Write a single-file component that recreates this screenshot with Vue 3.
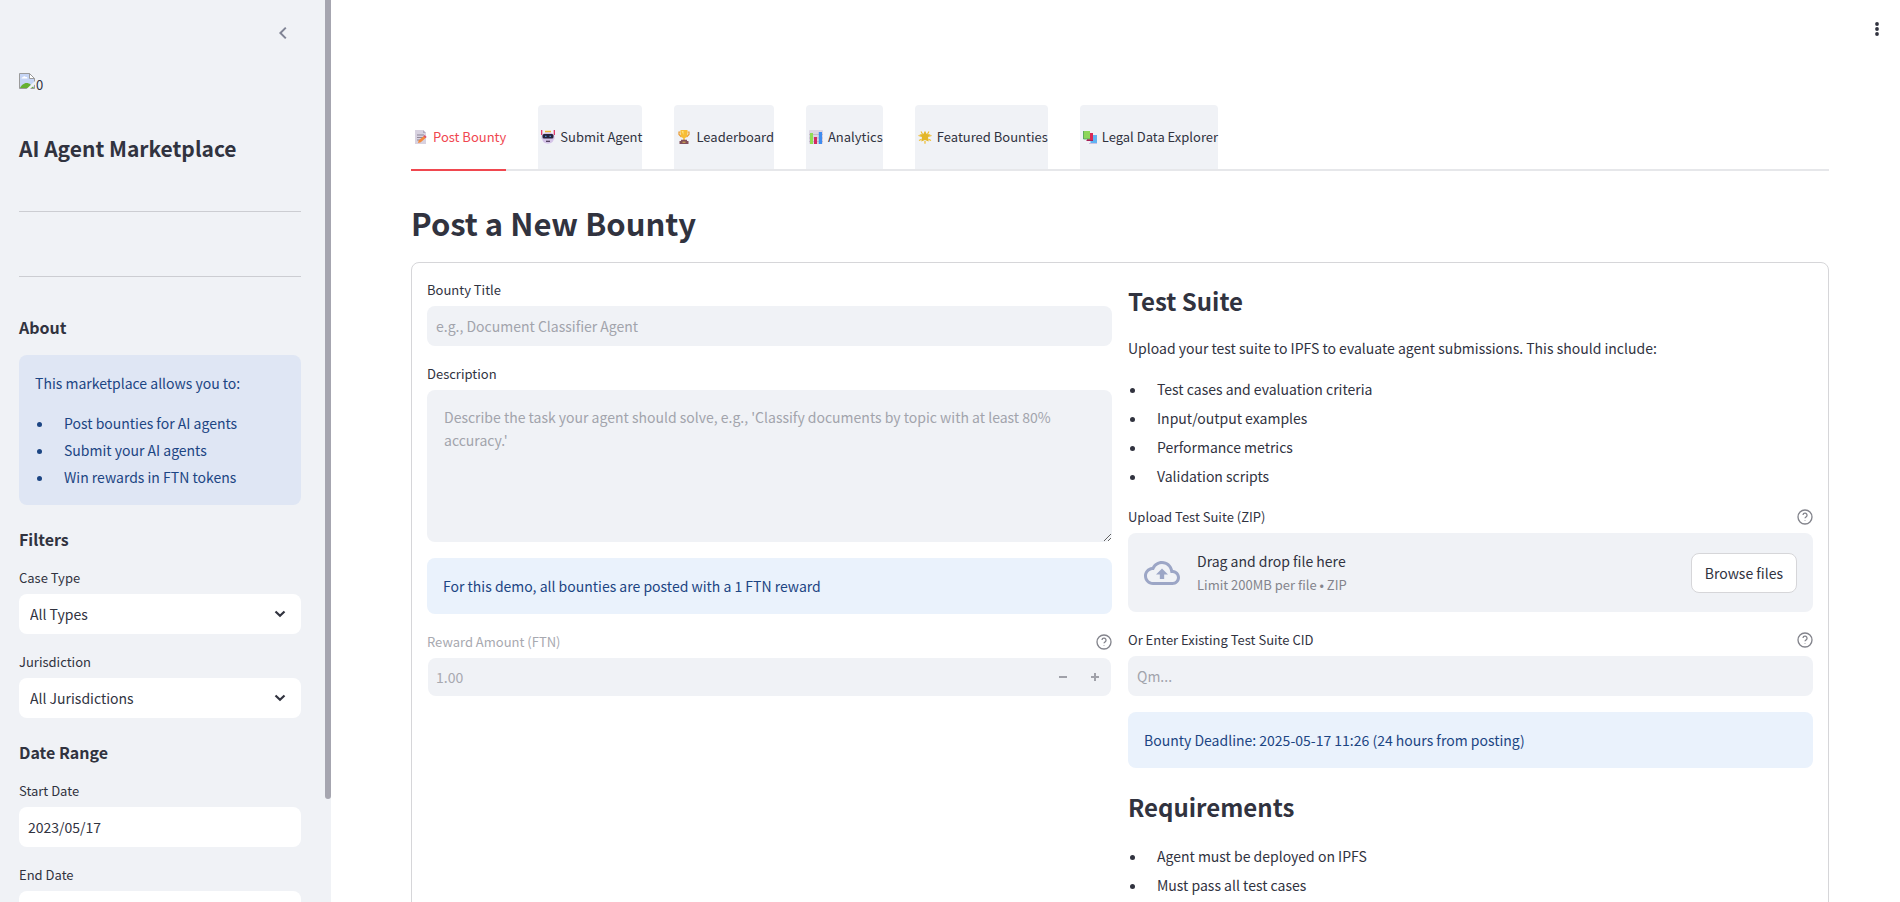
<script setup>
import { ref } from 'vue'

const tabs = [
  { icon: 'memo', label: 'Post Bounty' },
  { icon: 'robot', label: 'Submit Agent' },
  { icon: 'trophy', label: 'Leaderboard' },
  { icon: 'chart', label: 'Analytics' },
  { icon: 'star', label: 'Featured Bounties' },
  { icon: 'books', label: 'Legal Data Explorer' },
]
const active = ref(0)
const about = ['Post bounties for AI agents', 'Submit your AI agents', 'Win rewards in FTN tokens']
const suite = ['Test cases and evaluation criteria', 'Input/output examples', 'Performance metrics', 'Validation scripts']
const requirements = ['Agent must be deployed on IPFS', 'Must pass all test cases']
const selects = [
  { id: 'case-type', label: 'Case Type', value: 'All Types' },
  { id: 'jurisdiction', label: 'Jurisdiction', value: 'All Jurisdictions' },
]
const dates = [
  { id: 'start-date', label: 'Start Date', value: '2023/05/17' },
  { id: 'end-date', label: 'End Date', value: '2025/05/16' },
]
</script>

<template>
  <div class="app">
    <aside class="sidebar">
      <div class="sidebar-head">
        <button class="plain" aria-label="Collapse sidebar">
          <svg width="20" height="20" viewBox="0 0 20 20" fill="none" stroke="#808495" stroke-width="2"><path d="M12.8 4.6 7.4 10l5.4 5.4" /></svg>
        </button>
      </div>
      <div class="missing">
        <svg width="16" height="16" viewBox="0 0 16 16">
          <path d="M.5 15.500V.5h10l5 5v10z" fill="#c6d5f5" stroke="#9b9b9b" />
          <path d="M2.500 5.500h6c0-1.500-1-1.800-1.800-1.500C6 2.700 4.300 3 4.200 4.200c-1 0-1.600.5-1.700 1.300z" fill="#fff" />
          <path d="M1 15c1-2.500 4-5 6.500-5 1.500 0 3 .5 4 1.500L15 15z" fill="#66b032" />
          <path d="M16 8 7.500 16H11l5-4.500z" fill="#f0f2f6" />
          <path d="M10.500.5v5h5z" fill="#fff" stroke="#9b9b9b" />
        </svg>
        <span>0</span>
      </div>
      <h1>AI Agent Marketplace</h1>
      <hr />
      <hr />
      <h3>About</h3>
      <div class="alert about">
        <p>This marketplace allows you to:</p>
        <ul>
          <li v-for="item in about" :key="item">{{ item }}</li>
        </ul>
      </div>
      <h3>Filters</h3>
      <div v-for="s in selects" :key="s.id" class="field">
        <label :for="s.id">{{ s.label }}</label>
        <div class="select">
          <select :id="s.id"><option>{{ s.value }}</option></select>
          <svg width="12" height="8" viewBox="0 0 12 8" fill="none" stroke="#31333f" stroke-width="2.200"><path d="m1.500 1.500 4.500 4.300 4.500-4.300" /></svg>
        </div>
      </div>
      <h3 class="range">Date Range</h3>
      <div v-for="d in dates" :key="d.id" class="field">
        <label :for="d.id">{{ d.label }}</label>
        <input :id="d.id" type="text" :value="d.value" />
      </div>
      <span class="thumb"></span>
    </aside>

    <main>
      <button class="plain menu" aria-label="Main menu">
        <svg width="20" height="20" viewBox="0 0 20 20" fill="#31333f"><circle cx="10" cy="5" r="1.900" /><circle cx="10" cy="10" r="1.900" /><circle cx="10" cy="15" r="1.900" /></svg>
      </button>

      <div class="tabs" role="tablist">
        <button v-for="(t, i) in tabs" :key="t.label" role="tab" class="tab" :class="{ active: i === active }" :aria-selected="i === active" @click="active = i">
          <svg class="emoji" width="14" height="14" viewBox="0 0 14 14">
            <g v-if="t.icon === 'memo'">
              <path d="M1 0h8l3 3v11H1z" fill="#d8d2e0" />
              <path d="M9 0v3h3z" fill="#b3aabd" />
              <path d="M3 5h7M3 7.500h6M3 10h4" stroke="#8f8799" />
              <path d="m4 13 .8-2.800 5.400-4.500 1.900 1.900-5.300 4.700z" fill="#f58a3c" />
              <path d="m9.500 6.200 1.200-1.200 2 2-1.100 1.100z" fill="#d94f70" />
            </g>
            <g v-else-if="t.icon === 'robot'">
              <path d="M.7 0v5M13.300 0v5" stroke="#e0285f" stroke-width="1.200" />
              <path d="M4 1.600h6" stroke="#f2b632" stroke-width="1.600" />
              <path d="M1.500 5C2 1.200 12 1.200 12.500 5l1 .5v3.500l-1 .5c0 5.500-11 5.500-11 0l-1-.5V5.500z" fill="#d5c4e8" />
              <rect x="1.500" y="4" width="11" height="4.500" rx="1.500" fill="#27233d" />
              <path d="M4 6.300h1.500M8.500 6.300H10" stroke="#4b8ed0" stroke-width="1.200" />
              <path d="M5 11.300h4" stroke="#463353" stroke-width="1.200" />
            </g>
            <g v-else-if="t.icon === 'trophy'">
              <path d="M3.500 2H2v2.500L4.500 7M10.500 2H12v2.500L9.500 7" fill="none" stroke="#e99a2f" stroke-width="1.200" />
              <path d="M3.500 0h7v4c0 3-1.700 3.800-2.700 4v2.500H6.200V8C5.200 7.800 3.500 7 3.500 4z" fill="#f7bd35" />
              <path d="M4.500 1h2v4z" fill="#ffe37b" />
              <path d="M4 9.800h6V11h1.500v3h-9v-3H4z" fill="#83505a" />
              <path d="M5.500 12.200h3" stroke="#e5b94f" />
            </g>
            <g v-else-if="t.icon === 'chart'">
              <rect width="14" height="14" rx="1" fill="#dcd5e3" />
              <path d="M0 4.500h14M0 8h14M0 11.500h14" stroke="#b8afc2" stroke-width=".7" />
              <path d="M1 3h3v11H1z" fill="#91dc55" />
              <path d="M5 7h3v7H5z" fill="#d22961" />
              <path d="M9.800 2H13v12H9.800z" fill="#3f8cf0" />
            </g>
            <g v-else-if="t.icon === 'star'">
              <path d="M3 1.500 4.500 4M11 1.500 9.500 4M.5 5.500l2.500.8M13.500 5.500l-2.500.8M1 10.500l2.500-1.300M13 10.500l-2.500-1.300M7 11v2.700" stroke="#efbd2c" stroke-width="1.200" />
              <path d="m7 .8 1.700 3.300 3.800.5-2.500 2.900.7 3.900L7 9.900l-3.700 1.500.7-3.900-2.500-2.900 3.800-.5z" fill="#e3b628" />
            </g>
            <g v-else>
              <path d="M7.500 5H14v8H7.500z" fill="#60b2f2" />
              <path d="M6 13.500h8" stroke="#c9c2e4" />
              <path d="M4 3h6v7H4z" fill="#d92b57" />
              <path d="M3.500 10.500H10" stroke="#a61f56" />
              <path d="M0 1h7v8H0z" fill="#8ed65a" />
              <path d="M.5 9H7M.4 1v8" stroke="#4b9c66" stroke-width=".8" />
            </g>
          </svg>
          <span>{{ t.label }}</span>
        </button>
      </div>

      <h2>Post a New Bounty</h2>

      <form class="card" @submit.prevent>
        <section class="col">
          <div class="field">
            <label for="title">Bounty Title</label>
            <input id="title" type="text" placeholder="e.g., Document Classifier Agent" />
          </div>
          <div class="field">
            <label for="description">Description</label>
            <textarea id="description" placeholder="Describe the task your agent should solve, e.g., 'Classify documents by topic with at least 80% accuracy.'"></textarea>
          </div>
          <div class="alert">For this demo, all bounties are posted with a 1 FTN reward</div>
          <div class="field disabled">
            <div class="label-row">
              <label for="reward">Reward Amount (FTN)</label>
              <svg class="help" width="16" height="16" viewBox="0 0 24 24"><circle cx="12" cy="12" r="10.500" /><path d="M9 9a3 3 0 0 1 6 .6c0 2-3 2.600-3 4.400M12 17v.8" /></svg>
            </div>
            <div class="number">
              <input id="reward" type="text" value="1.00" disabled />
              <button type="button" disabled aria-label="Decrease"><svg width="10" height="10" viewBox="0 0 10 10"><path d="M1 5h8" /></svg></button>
              <button type="button" disabled aria-label="Increase"><svg width="10" height="10" viewBox="0 0 10 10"><path d="M1 5h8M5 1v8" /></svg></button>
            </div>
          </div>
        </section>

        <section class="col">
          <div>
            <h4>Test Suite</h4>
            <p class="intro">Upload your test suite to IPFS to evaluate agent submissions. This should include:</p>
            <ul class="points">
              <li v-for="item in suite" :key="item">{{ item }}</li>
            </ul>
          </div>
          <div class="field">
            <div class="label-row">
              <label for="browse">Upload Test Suite (ZIP)</label>
              <svg class="help" width="16" height="16" viewBox="0 0 24 24"><circle cx="12" cy="12" r="10.500" /><path d="M9 9a3 3 0 0 1 6 .6c0 2-3 2.600-3 4.400M12 17v.8" /></svg>
            </div>
            <div class="drop">
              <svg viewBox="0 0 24 24" class="cloud"><path d="M19.350 10.040C18.670 6.590 15.640 4 12 4 9.110 4 6.600 5.640 5.350 8.040 2.340 8.360 0 10.910 0 14c0 3.310 2.690 6 6 6h13c2.760 0 5-2.240 5-5 0-2.640-2.050-4.780-4.650-4.960zM19 18H6c-2.210 0-4-1.790-4-4 0-2.050 1.530-3.760 3.560-3.970l1.070-.11.5-.95C8.080 7.140 9.940 6 12 6c2.620 0 4.880 1.860 5.390 4.430l.3 1.500 1.530.11c1.560.1 2.780 1.410 2.780 2.960 0 1.650-1.350 3-3 3zM8 13h2.550v3h2.900v-3H16l-4-4z" /></svg>
              <div class="drop-text">
                <span>Drag and drop file here</span>
                <small>Limit 200MB per file • ZIP</small>
              </div>
              <button id="browse" type="button" class="browse">Browse files</button>
            </div>
          </div>
          <div class="field">
            <div class="label-row">
              <label for="cid">Or Enter Existing Test Suite CID</label>
              <svg class="help" width="16" height="16" viewBox="0 0 24 24"><circle cx="12" cy="12" r="10.500" /><path d="M9 9a3 3 0 0 1 6 .6c0 2-3 2.600-3 4.400M12 17v.8" /></svg>
            </div>
            <input id="cid" type="text" placeholder="Qm..." />
          </div>
          <div class="alert">Bounty Deadline: 2025-05-17 11:26 (24 hours from posting)</div>
          <div>
            <h4>Requirements</h4>
            <ul class="points">
              <li v-for="item in requirements" :key="item">{{ item }}</li>
            </ul>
          </div>
        </section>
      </form>
    </main>
  </div>
</template>

<style>
body { background: #fff; }
</style>

<style scoped>
.app, .app * { box-sizing: border-box; }
.app {
  display: flex;
  height: 100vh;
  overflow: hidden;
  color: #31333f;
  font: 14px/24px "Noto Sans CJK JP", "Noto Sans", sans-serif;
}
h1, h2, h3, h4, p, ul { margin: 0; font-weight: 400; }
input, select, textarea, button { font: inherit; color: inherit; }
svg { display: block; flex: none; }
.plain { padding: 0; border: 0; background: none; }

.sidebar {
  position: relative;
  flex: none;
  width: 331px;
  padding: 0 30px 0 19px;
  overflow: hidden;
  background: #f0f2f6;
}
.thumb {
  position: absolute;
  top: 0;
  right: 0;
  width: 6px;
  height: 799px;
  border-radius: 0 0 3px 3px;
  background: #a6a6b0;
}
.sidebar-head { display: flex; justify-content: flex-end; padding: 23px 8px 0 0; }
.missing { display: flex; gap: 1px; height: 60px; margin-top: 30px; font-size: 13px; line-height: 24px; }
h1 { height: 78px; font-size: 21px; font-weight: 700; line-height: 30px; }
hr { height: 1px; margin: 0 0 64px; border: 0; background: #cccdd2; }
h3 { font-size: 16px; font-weight: 700; line-height: 24px; }
.sidebar hr + h3 { margin: -26px 0 16px; }
.alert {
  padding: 16px;
  border-radius: 8px;
  background: #eaf2fc;
  color: #1c4583;
}
.about { height: 150px; margin-bottom: 22px; background: #dfe6f4; }
.about p { margin-bottom: 15px; }
ul { padding: 0; list-style: none; }
li { display: flex; align-items: center; line-height: 29px; }
li::before {
  content: "";
  width: 5px;
  height: 5px;
  margin: 1px 22px 0 2px;
  border-radius: 50%;
  background: currentColor;
}
.points { margin-bottom: -2px; }
.about li { line-height: 27px; }
.about + h3 { margin-bottom: 15px; }
.sidebar .field { margin-bottom: 16px; }
.range { margin: 22px 0 15px; }

.field label { font-size: 13px; line-height: 24px; display: block; }
.field > label, .label-row { margin-bottom: 4px; }
.label-row { display: flex; align-items: center; justify-content: space-between; }
input, select {
  display: block;
  width: 100%;
  height: 40px;
  padding: 0 9px;
  border: 0;
  border-radius: 8px;
  outline: 0;
  background: #f0f2f6;
}
.sidebar input, .sidebar select { background: #fff; }
.select { display: grid; align-items: center; }
.select > * { grid-area: 1 / 1; }
.select select { appearance: none; padding: 0 11px; }
.select svg { justify-self: end; margin-right: 15px; pointer-events: none; }
::placeholder { color: #a2a4ac; opacity: 1; }
textarea {
  display: block;
  width: 100%;
  height: 152px;
  padding: 16px 17px;
  border: 0;
  border-radius: 8px;
  outline: 0;
  line-height: 23px;
  resize: vertical;
  background: #f0f2f6;
}

main { position: relative; flex: 1; min-width: 0; padding: 105px 71px 0 80px; }
.menu { position: absolute; top: 19px; right: 13px; }
.tabs { display: flex; gap: 32px; border-bottom: 2px solid #e6e7ea; }
.tab {
  display: flex;
  align-items: center;
  gap: 5px;
  height: 64px;
  padding: 0 0 0 3px;
  border: 0;
  border-radius: 4px 4px 0 0;
  background: #f0f2f6;
  font-size: 13px;
  white-space: nowrap;
}
.tab.active { height: 66px; margin-bottom: -2px; border-bottom: 2px solid #f0474f; background: #fff; color: #f0474f; }
h2 { margin: 30px 0 17px; font-size: 31px; font-weight: 700; line-height: 44px; }

.card {
  display: grid;
  grid-template-columns: 1fr 1fr;
  gap: 16px;
  padding: 15px;
  border: 1px solid #d6d6d9;
  border-radius: 8px;
}
.col { display: flex; flex-direction: column; gap: 16px; min-width: 0; min-height: 660px; }
.help { fill: none; stroke: #83848c; stroke-width: 2; }
.disabled label, .disabled input { color: #a8a9b0; }
.number {
  display: flex;
  height: 38px;
  margin: 1px;
  border-radius: 8px;
  background: #f0f2f6;
}
.number input { flex: 1; height: 38px; padding: 0 8px; background: none; }
.number button { display: grid; place-items: center; width: 32px; padding: 0; border: 0; background: none; }
.number svg { stroke: #a0a1a9; stroke-width: 2; }
h4 { padding: 6px 0; font-size: 24px; font-weight: 700; line-height: 34px; }
.intro { margin: 12px 0 15px; }
h4 + ul { margin-top: 12px; }
.drop {
  display: flex;
  align-items: center;
  height: 79px;
  padding: 0 16px;
  border-radius: 8px;
  background: #f0f2f6;
}
.cloud { width: 36px; height: 36px; fill: #9ca6c6; }
.drop-text { display: flex; flex: 1; flex-direction: column; margin-left: 17px; }
small { color: #83848c; font-size: 13px; }
.browse { height: 40px; padding: 0 13px; border: 1px solid #d6d6d9; border-radius: 8px; background: #fff; }
</style>
